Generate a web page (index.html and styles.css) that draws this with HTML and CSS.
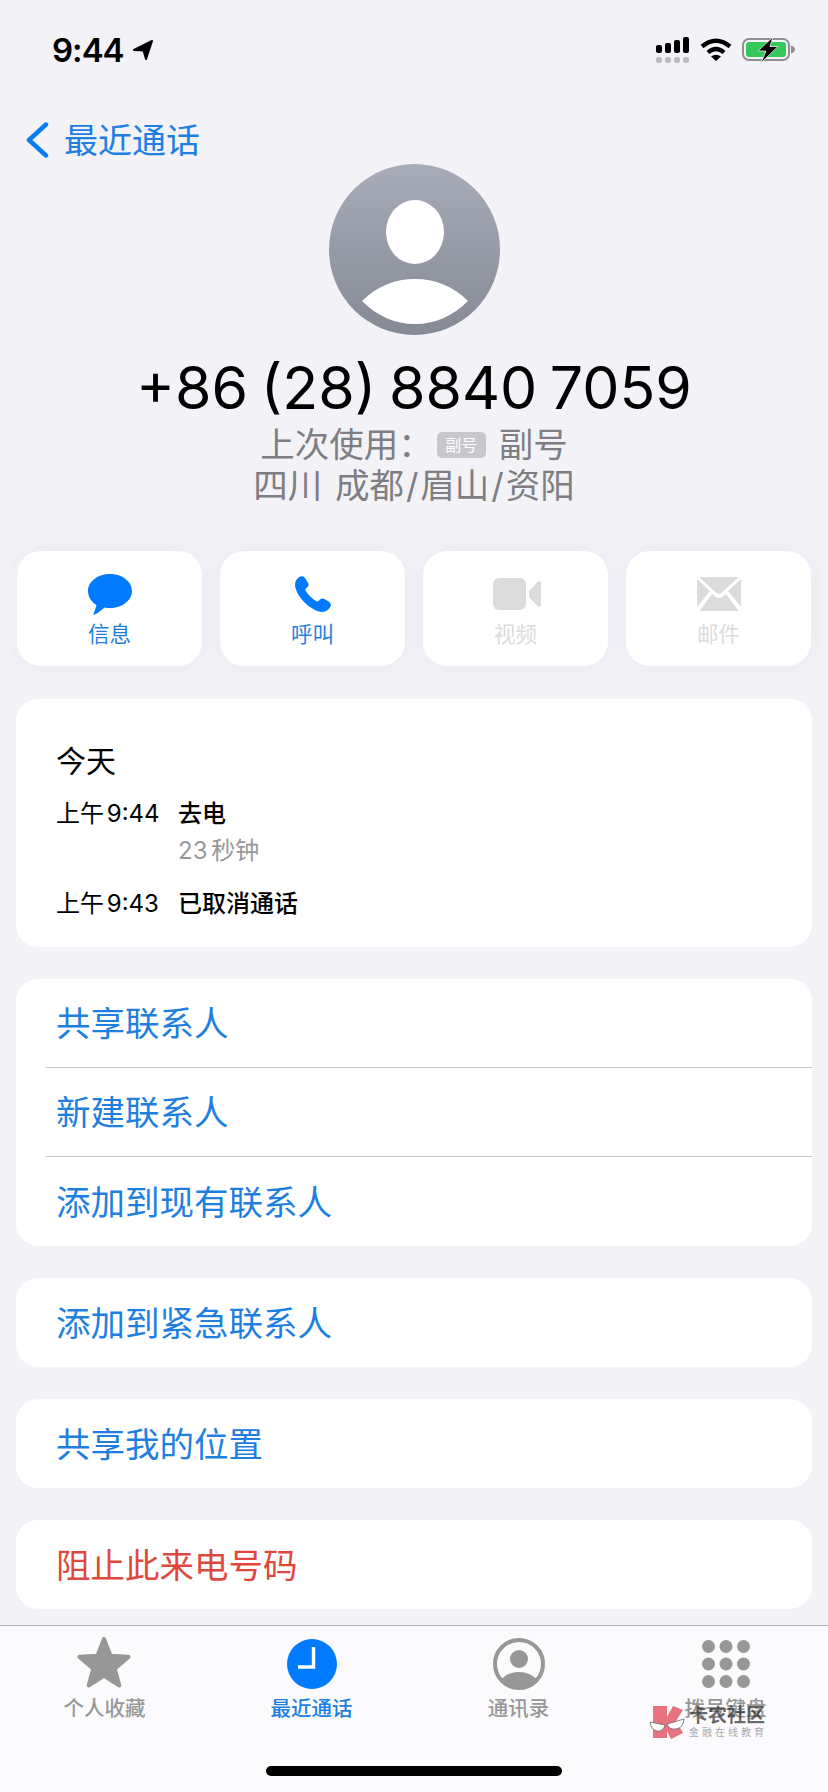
FILE: index.html
```html
<!DOCTYPE html>
<html lang="zh">
<head>
  <meta charset="UTF-8">
  <meta name="viewport" content="width=device-width, initial-scale=1.0">
  <title>最近通话</title>
  <link rel="stylesheet" href="styles.css">
</head>
<body>
  <div class="status">
    <div class="status-left">
      <span class="clock">9:44</span>
      <svg class="loc" width="20" height="20" viewBox="0 0 20 20"><path d="M1 10 L19 1 L13 19 L10.5 10.5 Z" fill="#000" stroke="#000" stroke-width="2" stroke-linejoin="round"/></svg>
    </div>
    <div class="status-right">
      <svg width="33" height="26" viewBox="0 0 33 26">
        <rect x="0" y="8" width="6" height="8" rx="2" fill="#000"/>
        <rect x="9" y="6" width="6" height="10" rx="2" fill="#000"/>
        <rect x="18" y="3" width="6" height="13" rx="2" fill="#000"/>
        <rect x="27" y="0" width="6" height="16" rx="2" fill="#000"/>
        <rect x="0" y="20" width="6" height="6" rx="2" fill="#bdbdc1"/>
        <rect x="9" y="20" width="6" height="6" rx="2" fill="#bdbdc1"/>
        <rect x="18" y="20" width="6" height="6" rx="2" fill="#bdbdc1"/>
        <rect x="27" y="20" width="6" height="6" rx="2" fill="#bdbdc1"/>
      </svg>
      <svg class="wifi" width="32" height="23" viewBox="0 0 32 23">
        <path d="M2 8.5 Q16 -3 30 8.5" fill="none" stroke="#000" stroke-width="4.4"/>
        <path d="M8 14.5 Q16 7.5 24 14.5" fill="none" stroke="#000" stroke-width="4.2"/>
        <path d="M11 18.5 Q16 15 21 18.5 L16 23 Z" fill="#000"/>
      </svg>
      <svg class="batt" width="54" height="27" viewBox="0 0 54 27">
        <rect x="1" y="2" width="46" height="21" rx="6" fill="none" stroke="#8e8e93" stroke-width="2"/>
        <rect x="4" y="5" width="40" height="15" rx="3" fill="#34c759"/>
        <path d="M49 8.5 C52 9.5 53 11 53 12.5 C53 14 52 15.5 49 16.5 Z" fill="#8e8e93"/>
        <path d="M31 0 L16 14 L24 14 L19 26 L36 9.5 L28 9.5 Z" fill="#000" stroke="#f2f2f7" stroke-width="0.8" stroke-linejoin="round"/>
      </svg>
    </div>
  </div>

  <div class="nav">
    <svg width="24" height="36" viewBox="0 0 24 36"><path d="M21 2.5 L4 18 L21 33.5" fill="none" stroke="#0a7cf2" stroke-width="4.4" stroke-linecap="round" stroke-linejoin="round"/></svg>
    <span class="nav-title">最近通话</span>
  </div>

  <div class="hero">
    <svg width="171" height="171" viewBox="0 0 171 171">
      <defs>
        <linearGradient id="avatarFill" x1="0" y1="0" x2="0" y2="1">
          <stop offset="0" stop-color="#a8acb9"/>
          <stop offset="1" stop-color="#868a95"/>
        </linearGradient>
      </defs>
      <circle cx="85.5" cy="85.5" r="85.5" fill="url(#avatarFill)"/>
      <ellipse cx="86" cy="68" rx="29" ry="32" fill="#fff"/>
      <path d="M33 137 C48 122 66 115 86 115 C106 115 124 122 139 137 C124 152 106 160 86 160 C66 160 48 152 33 137 Z" fill="#fff"/>
    </svg>
    <div class="phone">+86 (28) 8840 7059</div>
    <div class="sub sub-line">
      <span>上次使用：</span>
      <span class="badge">副号</span>
      <span>副号</span>
    </div>
    <div class="sub sub-place">四川 成都<span class="slash">/</span>眉山<span class="slash">/</span>资阳</div>
  </div>

  <div class="actions">
    <div class="action">
      <div class="action-icon">
        <svg width="44" height="41" viewBox="0 0 44 41"><path d="M22 0 C34 0 44 7.5 44 17 C44 26.5 34 34 22 34 C20 34 18 33.8 16.5 33.4 C13 36.5 9 39.5 5.5 41 C5 40 7.5 36 8.5 31 C3.5 28 0 23 0 17 C0 7.5 10 0 22 0 Z" fill="#007aff"/></svg>
      </div>
      <span class="action-label">信息</span>
    </div>
    <div class="action">
      <div class="action-icon">
        <svg width="36" height="36" viewBox="0 0 36 36"><path d="M4.5 0.8 C6.5 -0.4 8.8 0 10 2 L13 6.8 C14 8.4 13.7 10 12.3 11.2 L10.8 12.4 C10.2 13 10.2 13.6 10.5 14.2 C12.8 18.6 17 22.8 21.8 25.4 C22.4 25.7 23 25.6 23.5 25.1 L25 23.6 C26.2 22.3 27.8 22 29.4 23 L34 25.8 C35.8 27 36.4 29.2 35.2 31 C33.6 33.6 30.8 36 27.4 36 C22.4 36 15 31.8 9.4 26.2 C3.8 20.6 0 13.4 0 8.4 C0 5 2.2 2.4 4.5 0.8 Z" fill="#007aff"/></svg>
      </div>
      <span class="action-label">呼叫</span>
    </div>
    <div class="action">
      <div class="action-icon">
        <svg class="video" width="48" height="32" viewBox="0 0 48 32"><rect x="0" y="0" width="33" height="32" rx="6" fill="#dbdbdb"/><path d="M36 13 L45 3.5 C46.5 2.5 48 3.5 48 5 L48 27 C48 28.5 46.5 29.5 45 28.5 L36 19 Z" fill="#dbdbdb"/></svg>
      </div>
      <span class="action-label off">视频</span>
    </div>
    <div class="action">
      <div class="action-icon">
        <svg width="44" height="34" viewBox="0 0 44 34">
          <path d="M2 0 L42 0 L25 15.5 C23 17.2 21 17.2 19 15.5 Z" fill="#dbdbdb"/>
          <path d="M0 2 L13 14 L0 30 Z" fill="#dbdbdb"/>
          <path d="M44 2 L31 14 L44 30 Z" fill="#dbdbdb"/>
          <path d="M2.5 34 L15 17 L18 19.5 C21 21.5 23 21.5 26 19.5 L29 17 L41.5 34 Z" fill="#dbdbdb"/>
        </svg>
      </div>
      <span class="action-label off">邮件</span>
    </div>
  </div>

  <div class="card log">
    <div class="log-day">今天</div>
    <div class="log-row">
      <span class="log-time">上午 9:44</span>
      <div>
        <div class="log-what">去电</div>
        <div class="log-len">23 秒钟</div>
      </div>
    </div>
    <div class="log-row log-last">
      <span class="log-time">上午 9:43</span>
      <div class="log-what">已取消通话</div>
    </div>
  </div>

  <div class="card list">
    <div class="row"><span class="row-in">共享联系人</span></div>
    <div class="row"><span class="row-in">新建联系人</span></div>
    <div class="row"><span class="row-in">添加到现有联系人</span></div>
  </div>
  <div class="card">
    <div class="row"><span class="row-in">添加到紧急联系人</span></div>
  </div>
  <div class="card">
    <div class="row"><span class="row-in">共享我的位置</span></div>
  </div>
  <div class="card">
    <div class="row"><span class="row-in red">阻止此来电号码</span></div>
  </div>

  <div class="tabbar">
    <div class="tabs">
      <div class="tab">
        <div class="tab-icon">
          <svg class="star" width="56" height="52" viewBox="0 0 54 51"><path d="M27 3 L33.5 19.5 L51 20.5 L37.5 32 L42 48.5 L27 39 L12 48.5 L16.5 32 L3 20.5 L20.5 19.5 Z" fill="#979797" stroke="#979797" stroke-width="4" stroke-linejoin="round"/></svg>
        </div>
        <span class="tab-label">个人收藏</span>
      </div>
      <div class="tab active">
        <div class="tab-icon">
          <svg width="50" height="50" viewBox="0 0 50 50"><circle cx="25" cy="25" r="25" fill="#007aff"/><path d="M26.5 8 L26.5 28 L11 28" fill="none" stroke="#fff" stroke-width="3.4"/></svg>
        </div>
        <span class="tab-label">最近通话</span>
      </div>
      <div class="tab">
        <div class="tab-icon">
          <svg width="52" height="52" viewBox="0 0 52 52">
            <defs><clipPath id="ringClip"><circle cx="26" cy="26" r="25"/></clipPath></defs>
            <circle cx="26" cy="26" r="24" fill="none" stroke="#979797" stroke-width="4"/>
            <circle cx="26" cy="21" r="9" fill="#979797"/>
            <ellipse cx="26" cy="50" rx="21" ry="16" fill="#979797" clip-path="url(#ringClip)"/>
          </svg>
        </div>
        <span class="tab-label">通讯录</span>
      </div>
      <div class="tab">
        <div class="tab-icon">
          <svg width="48" height="48" viewBox="0 0 48 48" fill="#979797">
            <circle cx="6.5" cy="6.5" r="6.5"/><circle cx="24" cy="6.5" r="6.5"/><circle cx="41.5" cy="6.5" r="6.5"/>
            <circle cx="6.5" cy="24" r="6.5"/><circle cx="24" cy="24" r="6.5"/><circle cx="41.5" cy="24" r="6.5"/>
            <circle cx="6.5" cy="41.5" r="6.5"/><circle cx="24" cy="41.5" r="6.5"/><circle cx="41.5" cy="41.5" r="6.5"/>
          </svg>
        </div>
        <span class="tab-label">拨号键盘</span>
      </div>
    </div>
    <div class="home-bar"></div>

    <div class="mark">
      <svg width="36" height="34" viewBox="0 0 36 34">
        <path d="M4 1 L18 1 L18 12 L24 1 L34 5 L27 16 L34 28 L22 34 L18 26 L18 33 L4 33 Z" fill="#e8727d"/>
        <path d="M1 17 L16 20 Q14 27 8 26 Q2 25 1 17 Z" fill="#fff" stroke="#666" stroke-width="0.8"/>
        <path d="M18 19 L35 14 Q34 23 27 24 Q20 25 18 19 Z" fill="#fff" stroke="#666" stroke-width="0.8"/>
      </svg>
      <div class="mark-text">
        <div class="mark-name">卡农社区</div>
        <div class="mark-sub">金融在线教育</div>
      </div>
    </div>
  </div>
</body>
</html>
```

FILE: styles.css
```css
* {
  box-sizing: border-box;
}
body {
  margin: 0;
  height: 1792px;
  overflow: hidden;
  display: flex;
  flex-direction: column;
  background: #f2f2f7;
  color: #000;
  font-family: Inter, "Noto Sans CJK SC", sans-serif;
}

/* status bar */
.status {
  height: 116px;
  padding: 37px 32px 0 52px;
  display: flex;
  justify-content: space-between;
  align-items: flex-start;
}
.status-left {
  display: flex;
  align-items: center;
  gap: 9px;
}
.clock {
  font-size: 33px;
  font-weight: 600;
  line-height: 26px;
  letter-spacing: -1px;
}
.status-right {
  display: flex;
  align-items: flex-start;
  gap: 11px;
}
.wifi {
  margin-top: 1px;
}
.batt {
  margin-left: -1px;
}

/* nav */
.nav {
  height: 48px;
  padding-left: 25px;
  display: flex;
  align-items: center;
  gap: 15px;
}
.nav-title {
  padding-top: 2px;
  font-size: 34px;
  line-height: 48px;
  color: #1e7fe0;
}

/* header */
.hero {
  display: flex;
  flex-direction: column;
  align-items: center;
}
.hero svg {
  display: block;
}
.phone {
  margin-top: 18px;
  font-size: 59px;
  line-height: 70px;
  word-spacing: -4px;
}
.sub {
  font-size: 34.5px;
  line-height: 41px;
  color: #7e7e82;
}
.sub-line {
  margin-top: 1px;
  display: flex;
  align-items: center;
}
.sub-place {
  word-spacing: 3px;
}
.slash {
  margin: 0 2px;
}
.badge {
  width: 49px;
  height: 26px;
  margin: 0 13px 0 4px;
  border-radius: 5px;
  background: #c8c8cc;
  color: #fff;
  font-size: 16px;
  line-height: 26px;
  text-align: center;
}

/* action buttons */
.actions {
  margin-top: 45px;
  padding: 0 17px;
  display: grid;
  grid-template-columns: repeat(4, 185px);
  justify-content: space-between;
}
.action {
  height: 115px;
  padding-top: 22px;
  background: #fff;
  border-radius: 24px;
  box-shadow: 0 0 22px rgba(60, 60, 110, 0.05);
  display: flex;
  flex-direction: column;
  align-items: center;
}
.action-icon {
  height: 42px;
  display: flex;
  align-items: center;
  justify-content: center;
}
.video {
  margin-left: 3px;
}
.action-label {
  margin-top: 6px;
  font-size: 21.5px;
  line-height: 26px;
  color: #1e7fe0;
}
.action-label.off {
  color: #dcdcdc;
}

/* cards */
.card {
  margin: 32px 16px 0;
  background: #fff;
  border-radius: 22px;
  overflow: hidden;
}
.log {
  margin-top: 33px;
  height: 248px;
  padding: 43px 40px 0;
}
.log-day {
  font-size: 30px;
  line-height: 38px;
}
.log-row {
  margin-top: 18px;
  display: flex;
  font-size: 24px;
  line-height: 32px;
}
.log-last {
  margin-top: 21px;
}
.log-time {
  width: 122px;
  flex-shrink: 0;
  word-spacing: -4px;
}
.log-what {
  font-weight: 500;
}
.log-len {
  margin-top: 5px;
  color: #98989c;
  word-spacing: -3px;
}

.row {
  height: 89px;
  padding: 2px 0 0 40px;
  display: flex;
  align-items: center;
}
.list .row:first-child {
  height: 88px;
}
.list .row:last-child {
  height: 90px;
}
.row + .row {
  border-top: 1px solid #c6c6c8;
  margin-left: 30px;
  padding-left: 10px;
}
.row-in {
  font-size: 34.5px;
  line-height: 44px;
  color: #1e7fe0;
}
.row-in.red {
  color: #e0483e;
}

/* tab bar */
.tabbar {
  margin-top: auto;
  height: 167px;
  background: #fbfbfd;
  border-top: 1px solid #b4b4b8;
  display: flex;
  flex-direction: column;
  position: relative;
}
.tabs {
  display: grid;
  grid-template-columns: repeat(4, 207px);
  padding: 10px 0 0 1px;
}
.tab {
  display: flex;
  flex-direction: column;
  align-items: center;
  color: #979797;
}
.tab-icon {
  height: 56px;
  display: flex;
  align-items: center;
  justify-content: center;
}
.star {
  margin: 0 2px 5px 0;
}
.tab-label {
  margin-top: 5px;
  font-size: 20.5px;
  font-weight: 500;
  line-height: 24px;
}
.tab.active {
  color: #1e7fe0;
}
.home-bar {
  width: 296px;
  height: 10px;
  margin: 45px auto 0;
  border-radius: 5px;
  background: #000;
}

/* watermark sits over the last tab */
.mark {
  position: absolute;
  left: 649px;
  top: 79px;
  display: flex;
  gap: 4px;
}
.mark-name {
  font-size: 19px;
  font-weight: 700;
  line-height: 21px;
  color: rgba(50, 50, 50, 0.72);
}
.mark-sub {
  font-size: 10px;
  line-height: 13px;
  letter-spacing: 3px;
  color: #a9a9ad;
}
```
